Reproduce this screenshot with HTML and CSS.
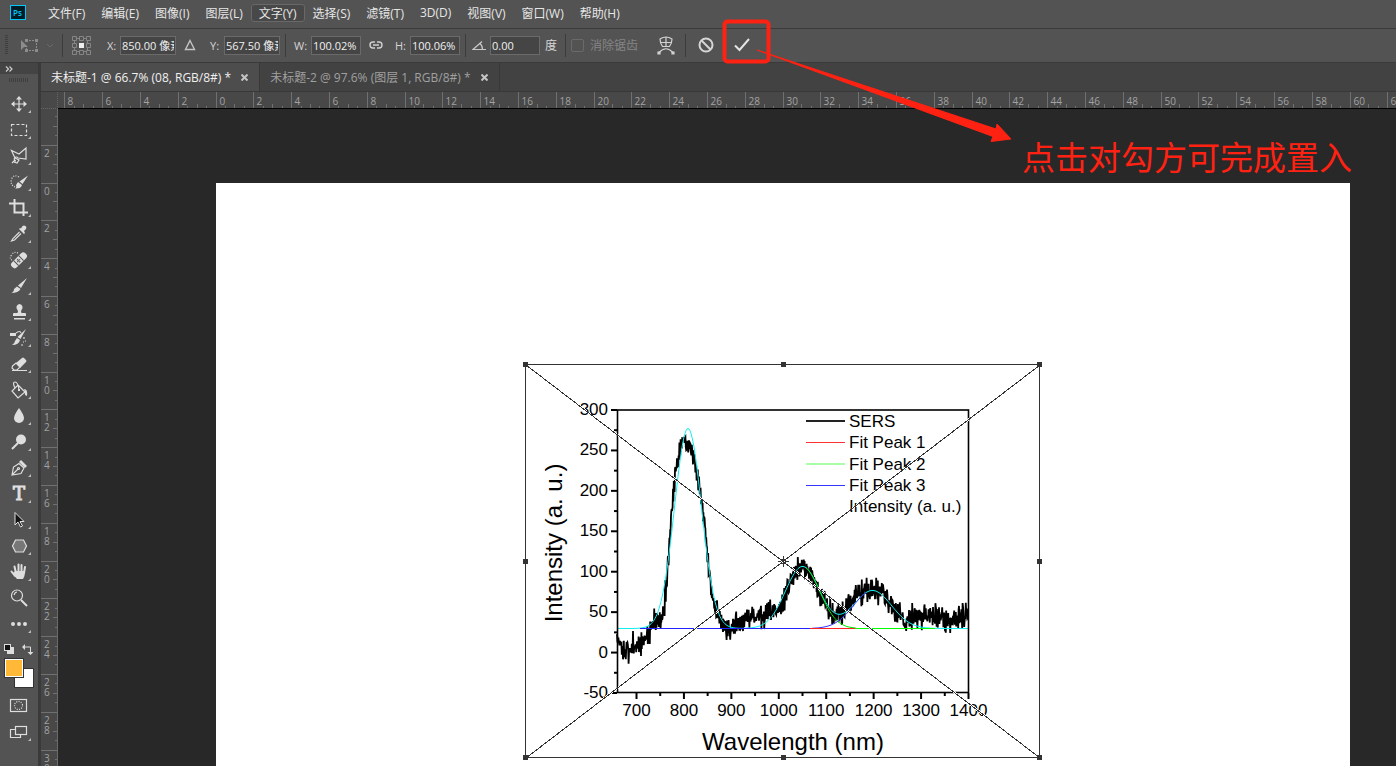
FILE: index.html
```html
<!DOCTYPE html>
<html lang="zh-CN">
<head>
    <meta charset="UTF-8">
    <meta name="viewport" content="width=device-width, initial-scale=1.0">
    <title>未标题-1 @ 66.7% (08, RGB/8#) *</title>
    <link rel="stylesheet" href="styles.css">
</head>
<body>
    <div class="app">
        <nav class="menu-bar">
            <svg class="logo" width="16" height="15" viewBox="0 0 16 15">
                <rect x="0.5" y="0.5" width="15" height="14" fill="#001d26" stroke="#00c8ff"/>
                <text x="3" y="11" class="logo-text">Ps</text>
            </svg>
            <button>文件(F)</button>
            <button>编辑(E)</button>
            <button>图像(I)</button>
            <button>图层(L)</button>
            <button class="hover">文字(Y)</button>
            <button>选择(S)</button>
            <button>滤镜(T)</button>
            <button>3D(D)</button>
            <button>视图(V)</button>
            <button>窗口(W)</button>
            <button>帮助(H)</button>
        </nav>

        <form class="options-bar">
            <span class="grip"></span>
            <button type="button" class="tool-preset" aria-label="变换">
                <svg width="36" height="18" viewBox="0 0 36 18">
                    <path d="M1 4v10l3-3h4z" fill="#8c8c8c"/>
                    <path d="M6 4.500h10M16.500 4v10M6 14.500h10M6.500 12v2" fill="none" stroke="#8c8c8c" stroke-dasharray="2 1"/>
                    <path d="M5 3h3v3h-3zM15 3h3v3h-3zM15 13h3v3h-3zM5 13h3v3h-3z" fill="#8c8c8c"/>
                    <path d="M27 8l3 3 3-3" fill="none" stroke="#6a6a6a"/>
                </svg>
            </button>
            <span class="divider"></span>
            <button type="button" class="ref-point" aria-label="参考点">
                <svg width="20" height="20" viewBox="0 0 20 20" fill="none" stroke="#868686">
                    <path d="M5 3.500h3M12 3.500h3M5 16.500h3M12 16.500h3M3.500 5v3M3.500 12v3M16.500 5v3M16.500 12v3"/>
                    <path d="M1.500 1.500h4v4h-4zM8.500 1.500h4v4h-4zM15.500 1.500h4v4h-4zM1.500 8.500h4v4h-4zM15.500 8.500h4v4h-4zM1.500 15.500h4v4h-4zM8.500 15.500h4v4h-4zM15.500 15.500h4v4h-4z" stroke-width="1"/>
                    <rect x="8" y="8" width="5" height="5" fill="#eee" stroke="none"/>
                </svg>
            </button>
            <label for="pos-x" class="first-label">X:</label>
            <input id="pos-x" class="pos" type="text" value="850.00 像素">
            <button type="button" class="delta" aria-label="相对定位">
                <svg width="12" height="12" viewBox="0 0 12 12"><path d="M6 1.500L10.500 10.500h-9z" fill="none" stroke="#c4c4c4" stroke-width="1.400"/></svg>
            </button>
            <label for="pos-y">Y:</label>
            <input id="pos-y" class="pos" type="text" value="567.50 像素">
            <span class="divider"></span>
            <label for="width">W:</label>
            <input id="width" type="text" value="100.02%">
            <button type="button" class="link" aria-label="保持长宽比">
                <svg width="14" height="10" viewBox="0 0 14 10" fill="none" stroke="#d0d0d0" stroke-width="1.400"><path d="M6 2H4a3 3 0 0 0 0 6h2M8 2h2a3 3 0 0 1 0 6H8M4 5h6"/></svg>
            </button>
            <label for="height">H:</label>
            <input id="height" type="text" value="100.06%">
            <span class="divider"></span>
            <label for="angle" class="angle" aria-label="旋转">
                <svg width="14" height="11" viewBox="0 0 14 11" fill="none" stroke="#c8c8c8"><path d="M14 9.500H1L10 1.500M8 3.500q2.500 2 2.500 6" stroke-width="1.200"/></svg>
            </label>
            <input id="angle" type="text" value="0.00">
            <span class="unit">度</span>
            <span class="divider"></span>
            <input id="antialias" type="checkbox" disabled>
            <label for="antialias" class="disabled">消除锯齿</label>
            <button type="button" class="warp" aria-label="变形">
                <svg width="18" height="20" viewBox="0 0 18 20" fill="none" stroke="#d2d2d2" stroke-width="1.200">
                    <path d="M3 4Q9 0 15 4Q15 8 12.500 11.500H5.500Q3 8 3 4zM3.500 7.500h11M9 2v9.500M2 17.500Q9 10 16 17.500"/>
                    <path d="M1 17h2v2h-2zM15 17h2v2h-2z" fill="#d2d2d2"/>
                </svg>
            </button>
            <span class="divider"></span>
            <button type="button" class="cancel" aria-label="取消变换">
                <svg width="16" height="16" viewBox="0 0 16 16" fill="none" stroke="#d6d6d6" stroke-width="2"><circle cx="8" cy="8" r="6.500"/><path d="M3.500 3.500l9 9"/></svg>
            </button>
            <button type="button" class="commit" aria-label="提交变换">
                <svg width="16" height="14" viewBox="0 0 16 14" fill="none" stroke="#e4e4e4" stroke-width="2"><path d="M1 7.500L5.500 12 15 1"/></svg>
            </button>
        </form>

        <main class="workspace">
            <aside class="toolbar">
                <button class="collapse" aria-label="展开面板">
                    <svg width="8" height="6" viewBox="0 0 8 6"><path d="M1 0.500l2.500 2.500L1 5.500M4.500 0.500L7 3 4.500 5.500" fill="none" stroke="#ccc" stroke-width="1.200"/></svg>
                </button>
                <div class="toolbar-grip"></div>
                <button class="tool" aria-label="移动工具"><svg viewBox="0 0 20 20"><path class="line" d="M10 3v14M3 10h14"/><path class="solid" d="M10 2l3 3.500H7zM10 18l3-3.500H7zM2 10l3.500-3v6zM18 10l-3.500-3v6z"/></svg></button>
                <button class="tool" aria-label="矩形选框工具"><svg viewBox="0 0 20 20"><rect class="line" x="2.500" y="4.500" width="15" height="11" stroke-dasharray="3 2"/></svg></button>
                <button class="tool" aria-label="多边形套索工具"><svg viewBox="0 0 20 20"><path class="line" d="M6 12L2.500 4.500 10 8l7-6v11l-8-1M9 12a2 2 0 1 0-2 3M6 12l4 2-2 3-3-1M6 14l-3 3"/></svg></button>
                <button class="tool" aria-label="快速选择工具"><svg viewBox="0 0 20 20"><path class="line" d="M10 5Q5 2 2.500 7 1 13 6 15" stroke-dasharray="1 1.500"/><path class="solid" d="M19 3.500L13.500 12 10.500 9.500zM9 10l4 3q-1 4-7 3.500 2-1 1-3.500z"/></svg></button>
                <button class="tool" aria-label="裁剪工具"><svg viewBox="0 0 20 20"><path class="thick" d="M5.500 1v13.500H16M0 5.500h14.500V18M16 14.500h3"/></svg></button>
                <button class="tool" aria-label="吸管工具"><svg viewBox="0 0 20 20"><path class="line" d="M10.500 8L4 14.500 2.500 17l3-1L12 9.500"/><path class="solid" d="M10 5l5 5 1-1-1-2 2-2q1-2-.5-3T13.500 2L12 4.500l-1-.5z"/></svg></button>
                <button class="tool" aria-label="污点修复画笔工具"><svg viewBox="0 0 20 20"><path class="line" d="M9 3Q5 1 2.500 5T3 10" stroke-dasharray="1 1.500"/><g transform="rotate(-45 10 11)"><rect class="solid" x="1" y="7" width="19" height="7" rx="3"/><path d="M6.500 7v7M13.500 7v7M9 9h2M8 10.500h4M9 12h2" stroke="#535353"/></g></svg></button>
                <button class="tool" aria-label="画笔工具"><svg viewBox="0 0 20 20"><path class="solid" d="M18 2l-6 10-3-2.500zM8 10.500l3.500 2.500q-2 4-9.500 4 3-1 3-4z"/></svg></button>
                <button class="tool" aria-label="仿制图章工具"><svg viewBox="0 0 20 20"><path class="solid" d="M10.500 2a3.500 3.500 0 0 1 2 6q-1 1 0 3H16q1 0 1 1v2H4v-2q0-1 1-1h3.500q1-2 0-3a3.500 3.500 0 0 1 2-6zM5 16h11v1.500H5z"/></svg></button>
                <button class="tool" aria-label="历史记录画笔工具"><svg viewBox="0 0 20 20"><path class="solid" d="M17 1l-5.500 10-3-2zM8 10l3 2q-1 5-8 5 3-2 3-4zM1 5h6v3H1z"/><path class="line" d="M7 5q4-3 5 0M15 9v2M14 14h1M16 13h1M12 17h2"/></svg></button>
                <button class="tool" aria-label="橡皮擦工具"><svg viewBox="0 0 20 20"><path class="line" d="M3.500 12L7 9l4 4-3 3H5l-2-2zM3 16.500h15"/><path class="solid" d="M7 9l6-5q1-1 2 0l2 2q1 1 0 2l-6 6z"/></svg></button>
                <button class="tool" aria-label="油漆桶工具"><svg viewBox="0 0 20 20"><path class="line" d="M9 5l7 7-7 6-6-7zM6 8q-3-6 0-6t4 8"/><path class="solid" d="M15 9q4 0 3 7-3-1-2-4zM9 9h2v2H9z"/></svg></button>
                <button class="tool" aria-label="模糊工具"><svg viewBox="0 0 20 20"><path class="solid" d="M10 2q5 7 5 10a5 5 0 0 1-10 0Q5 9 10 2z"/></svg></button>
                <button class="tool" aria-label="减淡工具"><svg viewBox="0 0 20 20"><circle class="solid" cx="12" cy="7.500" r="5"/><path class="thick" d="M9 11l-6 6"/></svg></button>
                <button class="tool" aria-label="钢笔工具"><svg viewBox="0 0 20 20"><path class="line" d="M3 17l1.500-8L10 5.500l5 4.500-3 5.500zM3 17l6-6"/><circle class="line" cx="9.500" cy="10.500" r="1"/><path class="solid" d="M10 4l2-2 6 6-2 2z"/></svg></button>
                <button class="tool" aria-label="横排文字工具"><svg viewBox="0 0 20 20"><text x="4" y="16" class="type-icon">T</text></svg></button>
                <button class="tool" aria-label="路径选择工具"><svg viewBox="0 0 20 20"><path d="M6 2.500v12.500l3-3 2.500 5 2-1-2.500-4.500h4z" fill="#141414" stroke="#e0e0e0"/></svg></button>
                <button class="tool" aria-label="多边形工具"><svg viewBox="0 0 20 20"><path d="M6.500 4h8l3 6-3 6h-8l-3-6z" fill="#777" stroke="#dedede" stroke-width="1.200"/></svg></button>
                <button class="tool" aria-label="抓手工具"><svg viewBox="0 0 20 20"><path class="thick" d="M7 11L5.500 4.500M9.500 10V2.500M12.500 10V3M15 11l1-6M6 14L2.500 9.500" stroke-linecap="round"/><path class="solid" d="M6 9h10q0 5-2 8H8q-2-2-4-6z"/></svg></button>
                <button class="tool plain" aria-label="缩放工具"><svg viewBox="0 0 20 20"><circle class="line" cx="8" cy="7.500" r="5.500" stroke-width="1.600"/><path class="line" d="M5 7q1-3 3-3"/><path class="thick" d="M12 12l6 6"/></svg></button>
                <button class="tool" aria-label="编辑工具栏"><svg viewBox="0 0 20 20"><path class="solid" d="M2 10a2 2 0 0 1 4 0 2 2 0 0 1-4 0zM8 10a2 2 0 0 1 4 0 2 2 0 0 1-4 0zM14 10a2 2 0 0 1 4 0 2 2 0 0 1-4 0z"/></svg></button>

                <div class="swatch-actions">
                    <button aria-label="默认颜色"><svg width="10" height="10" viewBox="0 0 10 10"><rect x="3" y="3" width="7" height="7" fill="#ddd"/><rect x="0.500" y="0.500" width="6" height="6" fill="#111" stroke="#ddd"/></svg></button>
                    <button aria-label="切换颜色"><svg width="11" height="11" viewBox="0 0 11 11"><path d="M2 3h6.500v6" fill="none" stroke="#ddd"/><path d="M0 3l3-3v6zM8.500 11L5.500 8h6z" fill="#ddd"/></svg></button>
                </div>
                <div class="swatches">
                    <button class="swatch back" aria-label="背景色"></button>
                    <button class="swatch front" aria-label="前景色"></button>
                </div>
                <button class="tool plain" aria-label="快速蒙版"><svg viewBox="0 0 20 20"><rect class="line" x="1.500" y="3.500" width="16" height="12"/><circle class="line" cx="9.500" cy="9.500" r="4" stroke-dasharray="1 1.300"/></svg></button>
                <button class="tool" aria-label="屏幕模式"><svg viewBox="0 0 20 20"><path class="line" d="M7 7.500H1.500v8h10V13"/><rect class="line" x="6.500" y="4.500" width="11" height="8"/></svg></button>
            </aside>

            <section class="document">
                <div class="tabs">
                    <div class="tab active">
                        <button class="tab-name">未标题-1 @ 66.7% (08, RGB/8#) *</button>
                        <button class="close" aria-label="关闭"><svg width="7" height="7" viewBox="0 0 7 7"><path d="M0.500 0.500l6 6M6.500 0.500l-6 6"/></svg></button>
                    </div>
                    <div class="tab">
                        <button class="tab-name">未标题-2 @ 97.6% (图层 1, RGB/8#) *</button>
                        <button class="close" aria-label="关闭"><svg width="7" height="7" viewBox="0 0 7 7"><path d="M0.500 0.500l6 6M6.500 0.500l-6 6"/></svg></button>
                    </div>
                </div>
                <div class="view">
                    <div class="corner"></div>
                    <svg class="ruler ruler-x" id="ruler-x"></svg>
                    <svg class="ruler ruler-y" id="ruler-y"></svg>
                    <div class="stage">
                        <div class="artboard">
                            <svg class="placed" width="522" height="400" viewBox="522 361 522 400">
                                <g id="ticks" stroke="#000" stroke-width="2"></g>
                                <g id="tick-labels" class="tick-label"></g>
                                <path id="trace" fill="none" stroke="#000" stroke-width="1.800"/>
                                <g id="fits" fill="none" stroke-width="1"></g>
                                <rect x="617.500" y="410" width="351" height="282.500" fill="none" stroke="#000" stroke-width="1.600"/>
                                <g class="legend">
                                    <path d="M806 421h39" stroke="#222" stroke-width="2"/>
                                    <path d="M806 442.500h39" stroke="#f33"/>
                                    <path d="M806 464h39" stroke="#a8ffa8" stroke-width="2"/>
                                    <path d="M806 485.500h39" stroke="#33f"/>
                                    <text x="849" y="427">SERS</text>
                                    <text x="849" y="448">Fit Peak 1</text>
                                    <text x="849" y="470">Fit Peak 2</text>
                                    <text x="849" y="491">Fit Peak 3</text>
                                    <text x="849" y="512">Intensity (a. u.)</text>
                                </g>
                                <text class="axis-title" x="793" y="750" text-anchor="middle">Wavelength (nm)</text>
                                <text class="axis-title" transform="translate(562 543) rotate(-90)" text-anchor="middle">Intensity (a. u.)</text>
                                <g class="transform-box">
                                    <path class="halo" d="M526 365L1040 758M1040 365L526 758"/>
                                    <path d="M526 365L1040 758M1040 365L526 758"/>
                                    <rect x="525.500" y="364.500" width="514" height="393"/>
                                    <path class="handles" d="M523 362h5v5h-5zM781 362h5v5h-5zM1037 362h5v5h-5zM523 559h5v5h-5zM1037 559h5v5h-5zM523 755h5v5h-5zM781 755h5v5h-5zM1037 755h5v5h-5z"/>
                                    <circle cx="783.500" cy="561.500" r="2.500"/>
                                    <path d="M783.500 556v3M783.500 564v3M778 561.500h3M786 561.500h3"/>
                                </g>
                            </svg>
                        </div>
                    </div>
                </div>
            </section>
        </main>

        <svg class="pointer" width="292" height="126" viewBox="720 18 292 126">
            <rect x="724.500" y="21.500" width="44" height="40" rx="3" fill="none" stroke="#ff2212" stroke-width="4"/>
            <path d="M757 50L996 129l1-5 14 15-20 2.500 2-5z" fill="#ff2212" stroke="#ff2212"/>
        </svg>
        <p class="note">点击对勾方可完成置入</p>
    </div>
    <script src="app.js"></script>
</body>
</html>
```
FILE: styles.css
```css
* {
    box-sizing: border-box;
}
body {
    margin: 0;
    font-family: "Open Sans", "Noto Sans CJK SC", sans-serif;
    font-size: 12px;
    color: #e6e6e6;
    background: #282828;
}
button {
    margin: 0;
    padding: 0;
    border: none;
    background: none;
    color: inherit;
    font: inherit;
    display: flex;
    align-items: center;
    justify-content: center;
}
svg {
    display: block;
    flex: none;
}
.app {
    position: relative;
    height: 100vh;
    display: flex;
    flex-direction: column;
    overflow: hidden;
}

/* menu */
.menu-bar {
    height: 28px;
    flex: none;
    display: flex;
    align-items: center;
    padding: 0 10px 3px;
    background: #535353;
}
.logo {
    margin-right: 14px;
}
.logo-text {
    font-size: 8px;
    font-weight: 600;
    fill: #00c8ff;
}
.menu-bar button {
    height: 18px;
    padding: 0 7px;
    border: 1px solid transparent;
    border-radius: 3px;
}
.menu-bar .hover {
    background: #484848;
    border-color: #686868;
}

/* options */
.options-bar {
    height: 35px;
    flex: none;
    display: flex;
    align-items: center;
    padding: 0 0 1px 5px;
    border-top: 1px solid #3a3a3a;
    border-bottom: 1px solid #3a3a3a;
    background: #535353;
    font-size: 11px;
    color: #d6d6d6;
}
.options-bar > * {
    flex: none;
}
.grip {
    width: 3px;
    height: 20px;
    background: repeating-linear-gradient(#3f3f3f 0 1px, #535353 1px 2px);
}
.divider {
    width: 1px;
    height: 23px;
    margin-right: 8px;
    background: #3c3c3c;
}
.tool-preset {
    margin: 0 6px 0 12px;
}
.first-label {
    margin-left: 16px;
}
.options-bar label {
    width: 17px;
}
.options-bar .first-label {
    width: 13px;
}
.options-bar label[for="pos-y"] {
    width: 14px;
}
.options-bar input[type="text"] {
    width: 50px;
    height: 19px;
    margin: 0 5px 0 0;
    padding: 0 1px;
    border: 1px solid #6a6a6a;
    background: #454545;
    color: #f0f0f0;
    font: inherit;
}
.options-bar input.pos {
    width: 56px;
}
.delta {
    margin: 0 14px 0 3px;
}
.link {
    margin: 0 12px 0 3px;
}
.options-bar label[for="height"] {
    width: 15px;
}
.unit {
    width: 20px;
    font-size: 12px;
}
.options-bar .angle {
    margin-left: -2px;
    width: 18px;
}
input[type="checkbox"] {
    appearance: none;
    width: 13px;
    height: 13px;
    margin: 0 6px 0 -3px;
    border: 1px solid #6a6a6a;
    border-radius: 2px;
}
.options-bar .disabled {
    width: 67px;
    font-size: 12px;
    color: #858585;
}
.warp {
    margin-right: 10px;
}
.cancel {
    margin: 0 20px 0 4px;
}

/* toolbar */
.workspace {
    flex: 1;
    min-height: 0;
    display: flex;
}
.toolbar {
    width: 41px;
    flex: none;
    border-right: 3px solid #3a3a3a;
    background: #535353;
    overflow: hidden;
}
.collapse {
    width: 100%;
    height: 11px;
    padding-left: 5px;
    justify-content: flex-start;
    background: #444;
}
.toolbar-grip {
    width: 20px;
    height: 4px;
    margin: 4px 9px 9px;
    background: repeating-linear-gradient(90deg, #3f3f3f 0 1px, #535353 1px 2px);
}
.tool {
    position: relative;
    width: 38px;
    height: 26px;
}
.tool::after {
    content: "";
    position: absolute;
    right: 7px;
    bottom: 4px;
    border-left: 3px solid transparent;
    border-bottom: 3px solid #bbb;
}
.tool.plain::after {
    display: none;
}
.tool svg {
    width: 20px;
    height: 20px;
}
.line {
    fill: none;
    stroke: #dedede;
    stroke-width: 1.2;
}
.thick {
    fill: none;
    stroke: #dedede;
    stroke-width: 2;
}
.solid {
    fill: #dedede;
}
.type-icon {
    font: 18px "DejaVu Serif", serif;
    fill: #e0e0e0;
    stroke: #e0e0e0;
}
.swatch-actions {
    display: flex;
    gap: 8px;
    padding: 4px 4px 0;
    height: 20px;
}
.swatches {
    position: relative;
    height: 36px;
}
.swatch {
    position: absolute;
    width: 20px;
    height: 20px;
    border: 1px solid #333;
    background: #fff;
}
.swatch.back {
    left: 14px;
    top: 11px;
}
.swatch.front {
    left: 4px;
    top: 1px;
    background: #ffb937;
    box-shadow: inset 0 0 0 1px #fff;
}

/* document */
.document {
    flex: 1;
    min-width: 0;
    display: flex;
    flex-direction: column;
}
.tabs {
    height: 29px;
    flex: none;
    display: flex;
    border-bottom: 1px solid #383838;
    background: #424242;
}
.tab {
    display: flex;
    align-items: center;
    gap: 10px;
    padding: 0 11px 0 10px;
    border-right: 1px solid #383838;
    color: #a0a0a0;
}
.tab.active {
    background: #4d4d4d;
    color: #f0f0f0;
}
.close path {
    stroke: #c4c4c4;
    stroke-width: 2;
}
.view {
    flex: 1;
    min-height: 0;
    display: grid;
    grid-template: 17px 1fr / 17px 1fr;
}
.corner {
    background: #484848;
    border-right: 1px dotted #666;
    border-bottom: 1px dotted #666;
}
.ruler {
    width: 100%;
    height: 100%;
    background: #484848;
    overflow: hidden;
}
.ruler-x {
    border-bottom: 1px solid #000;
}
.ruler-y {
    border-right: 1px solid #6a6a6a;
}
.ruler line {
    stroke: #707070;
}
.ruler text {
    font-size: 10px;
    fill: #a2a2a2;
}
.stage {
    display: flex;
    overflow: hidden;
    padding: 74px 46px 0 158px;
    background: #282828;
}
.artboard {
    position: relative;
    flex: 1;
    background: #fff;
}
.placed {
    position: absolute;
    left: 306px;
    top: 178px;
    font-family: "Liberation Sans", Arial, sans-serif;
}
.tick-label,
.legend {
    font-size: 17px;
}
.axis-title {
    font-size: 24px;
}
.transform-box {
    fill: none;
    stroke: #333;
    shape-rendering: crispEdges;
}
.transform-box .halo {
    stroke: #fff;
    stroke-width: 2;
}
.transform-box .handles {
    fill: #333;
    stroke: none;
}

/* annotation */
.pointer {
    position: absolute;
    left: 720px;
    top: 18px;
    pointer-events: none;
}
.note {
    position: absolute;
    left: 1022px;
    top: 136px;
    margin: 0;
    font-family: "Noto Sans CJK SC", sans-serif;
    font-size: 33px;
    line-height: 40px;
    white-space: nowrap;
    color: #ff2212;
}
```
FILE: app.js
```js
const NS = 'http://www.w3.org/2000/svg';

function add(parent, tag, attrs, text) {
    const el = document.createElementNS(NS, tag);
    for (const key in attrs) el.setAttribute(key, attrs[key]);
    if (text !== undefined) el.textContent = text;
    parent.appendChild(el);
}

// Rulers: one labelled mark every 2 cm, split in four
const STEP = 37.8;

function drawRuler(id, origin, vertical) {
    const svg = document.getElementById(id);
    const box = svg.getBoundingClientRect();
    const size = vertical ? box.height : box.width;
    svg.textContent = '';
    for (let i = -20; origin + i * STEP / 4 < size; i++) {
        const p = Math.floor(origin + i * STEP / 4) + 0.5;
        if (p < 0) continue;
        const len = i % 4 === 0 ? 17 : i % 2 === 0 ? 5 : 3;
        add(svg, 'line', vertical
            ? { x1: 17 - len, x2: 17, y1: p, y2: p }
            : { x1: p, x2: p, y1: 17 - len, y2: 17 });
        if (i % 4 !== 0) continue;
        const label = String(Math.abs(i / 2));
        if (vertical) {
            [...label].forEach((d, n) => add(svg, 'text', { x: 3, y: p + 11 + n * 10 }, d));
        } else {
            add(svg, 'text', { x: p + 3, y: 13 }, label);
        }
    }
}

function drawRulers() {
    drawRuler('ruler-x', 158, false);
    drawRuler('ruler-y', 74, true);
}
drawRulers();
window.addEventListener('resize', drawRulers);

// Chart axes
const ticks = document.getElementById('ticks');
const labels = document.getElementById('tick-labels');
const px = nm => 636.5 + (nm - 700) * 332 / 700;
const py = v => 410 + (300 - v) * 283 / 350;

for (let v = -50; v <= 300; v += 25) {
    const major = v % 50 === 0;
    add(ticks, 'line', { x1: major ? 611 : 614, x2: 617, y1: py(v), y2: py(v) });
    if (major) add(labels, 'text', { x: 608, y: py(v) + 5, 'text-anchor': 'end' }, v);
}
for (let nm = 700; nm <= 1400; nm += 50) {
    const major = nm % 100 === 0;
    add(ticks, 'line', { x1: px(nm), x2: px(nm), y1: 693, y2: major ? 699 : 696 });
    if (major) add(labels, 'text', { x: px(nm), y: 716, 'text-anchor': 'middle' }, nm);
}

// SERS trace: smooth knots with repeatable noise on top
const knots = [[617,643],[625,649],[636,648],[642,640],[648,634],[653,625],[657,616],[661,624],
    [664,610],[666,590],[668,560],[671,520],[674,485],[678,455],[682,442],[686,442],[690,446],
    [694,456],[697,472],[701,495],[705,530],[709,570],[712,598],[716,612],[722,622],[730,628],
    [740,626],[750,617],[760,619],[768,612],[776,610],[783,606],[787,590],[793,575],[800,568],
    [808,571],[814,582],[820,594],[828,607],[834,616],[840,614],[848,604],[858,596],[866,589],
    [874,590],[882,592],[890,602],[898,616],[906,624],[915,616],[925,614],[940,618],[950,622],
    [958,617],[968,613]];

let seed = 11;
function random() {
    seed = (seed * 16807) % 2147483647;
    return seed / 2147483647;
}

let path = '';
let k = 0;
for (let x = 617; x <= 968; x += 0.4) {
    while (k < knots.length - 2 && x > knots[k + 1][0]) k++;
    const [x0, y0] = knots[k];
    const [x1, y1] = knots[k + 1];
    const y = y0 + (y1 - y0) * (x - x0) / (x1 - x0);
    const noise = (random() + random() + random() - 1.5) * 12;
    path += (path ? 'L' : 'M') + x.toFixed(1) + ' ' + (y + noise).toFixed(1);
}
document.getElementById('trace').setAttribute('d', path);

// Fitted gaussians
const BASE = 628.5;
const peaks = [[688, 200, 13.5], [802.5, 62, 17], [872.5, 38, 19]];
const gauss = (x, [c, a, s]) => a * Math.exp(-((x - c) ** 2) / (2 * s * s));
const fits = document.getElementById('fits');

function curve(from, to, used, color) {
    let d = '';
    for (let x = from; x <= to; x++) {
        const y = BASE - used.reduce((sum, p) => sum + gauss(x, p), 0);
        d += (d ? 'L' : 'M') + x + ' ' + y.toFixed(1);
    }
    add(fits, 'path', { d, stroke: color });
}
curve(617, 968, peaks, '#1ee');
curve(806, 856, [peaks[1]], '#0e0');
curve(812, 866, [peaks[2]], '#33f');
curve(640, 810, [], '#22f');
curve(810, 855, [], '#f22');
curve(855, 935, [], '#0f0');
```
